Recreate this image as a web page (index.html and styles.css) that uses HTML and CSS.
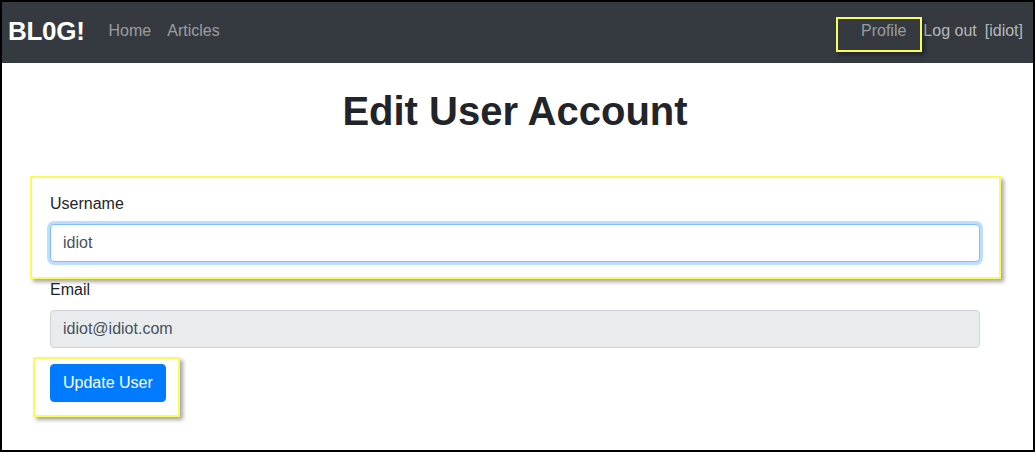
FILE: index.html
```html
<!DOCTYPE html>
<html lang="en">
<head>
<meta charset="utf-8">
<title>Edit User Account</title>
<link rel="stylesheet" href="styles.css">
</head>
<body>
<div class="frame">
  <nav class="navbar">
    <a class="brand" href="#">BL0G!</a>
    <ul class="nav">
      <li><a class="nav-link" href="#">Home</a></li>
      <li><a class="nav-link" href="#">Articles</a></li>
    </ul>
    <ul class="nav nav-right">
      <li><a class="nav-link hl hl-profile" href="#">Profile</a></li>
      <li><a class="nav-text logout" href="#">Log out</a></li>
      <li><span class="nav-text user">[idiot]</span></li>
    </ul>
  </nav>
  <main class="container">
    <h1 class="title">Edit User Account</h1>
    <form class="form">
      <div class="form-group hl hl-group">
        <label class="label" for="username">Username</label>
        <input class="input input-focus" id="username" type="text" value="idiot">
      </div>
      <div class="form-group">
        <label class="label" for="email">Email</label>
        <input class="input input-disabled" id="email" type="text" value="idiot@idiot.com" disabled>
      </div>
      <div class="actions">
        <button class="btn hl hl-btn" type="button">Update User</button>
      </div>
    </form>
  </main>
</div>
</body>
</html>
```

FILE: styles.css
```css
* { box-sizing: border-box; }
html, body { margin: 0; padding: 0; background: #fff; }
body {
  font-family: "Liberation Sans", Arial, sans-serif;
  font-size: 16px;
  line-height: 1.5;
  color: #212529;
}
.frame {
  width: 1035px;
  height: 452px;
  border: 2px solid #000;
  overflow: hidden;
  background: #fff;
}
.navbar {
  height: 61px;
  background: #343a40;
  display: flex;
  align-items: center;
  padding: 0 10px 3px 6px;
}
.brand {
  color: #fff;
  font-weight: bold;
  font-size: 26px;
  line-height: 1;
  text-decoration: none;
  margin-right: 16px;
  letter-spacing: -0.3px;
}
.nav {
  list-style: none;
  margin: 0;
  padding: 0;
  display: flex;
  align-items: center;
}
.nav-right { margin-left: auto; }
.nav-link {
  display: block;
  padding: 0 8px;
  color: rgba(255,255,255,.5);
  text-decoration: none;
  line-height: 24px;
}
.nav-text {
  display: block;
  color: rgba(255,255,255,.65);
  text-decoration: none;
  line-height: 24px;
}
.logout { margin-left: 9px; }
.user { margin-left: 8px; }

.hl { position: relative; }
.hl::after {
  content: "";
  position: absolute;
  border: 2px solid #fbfb5c;
  box-shadow: 3px 3px 4px rgba(0,0,0,.35);
  pointer-events: none;
}
.hl-profile::after { top: -2px; bottom: -9px; left: -17px; right: -8px; }
.hl-group::after { top: -16px; bottom: -17px; left: -20px; right: -21px; }
.hl-btn::after { top: -8px; bottom: -16px; left: -18px; right: -15px; }

.container {
  width: 930px;
  margin-left: 48px;
}
.title {
  margin: 24px 0 0;
  text-align: center;
  font-size: 40px;
  line-height: 48px;
  font-weight: bold;
  height: 105px;
}
.form-group { margin-bottom: 16px; }
.label {
  display: block;
  margin-bottom: 8px;
  line-height: 24px;
}
.input {
  display: block;
  width: 100%;
  height: 38px;
  padding: 6px 12px;
  font-family: inherit;
  font-size: 16px;
  line-height: 24px;
  color: #495057;
  background: #fff;
  border: 1px solid #ced4da;
  border-radius: 4px;
}
.input-focus {
  border-color: #80bdff;
  box-shadow: 0 0 0 3px rgba(0,123,255,.25);
  outline: none;
}
.input-disabled {
  background: #e9ecef;
  opacity: 1;
}
.btn {
  display: inline-block;
  height: 38px;
  padding: 6px 12px;
  font-family: inherit;
  font-size: 16px;
  line-height: 24px;
  color: #fff;
  background: #007bff;
  border: 1px solid #007bff;
  border-radius: 4px;
}
```
